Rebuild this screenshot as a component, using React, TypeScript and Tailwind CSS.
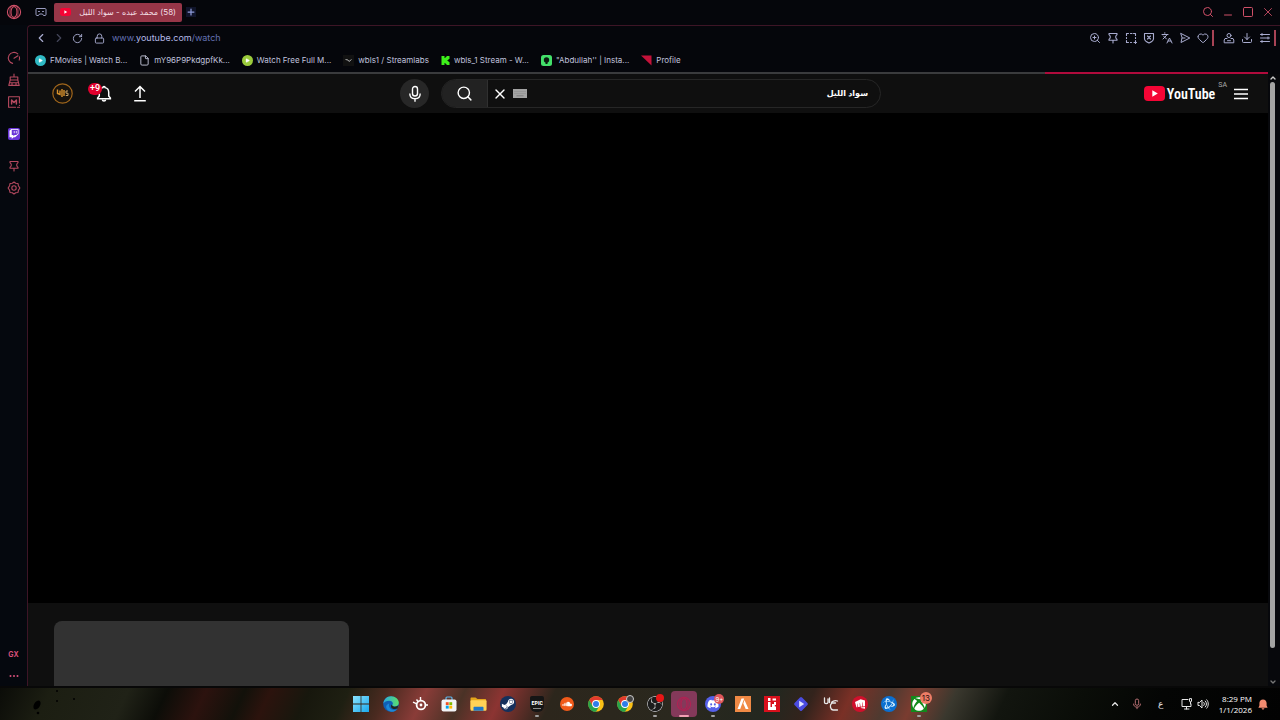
import React from 'react';
import {
    ChevronLeft, ChevronRight, ChevronUp, ChevronDown, RotateCw, Lock, Search, X, Square, Minus, Plus,
    ZoomIn, Languages, Heart, Download, File, Play,
} from 'lucide-react';
import { FaTwitch, FaSteamSymbol, FaSoundcloud, FaDiscord, FaXbox } from 'react-icons/fa';
import { SiRiotgames, SiBattledotnet, SiKick, SiObsstudio } from 'react-icons/si';

/* ---------- small drawings ---------- */

const line = { fill: 'none', stroke: 'currentColor', strokeLinecap: 'round', strokeLinejoin: 'round' } as const;

const OperaLogo = () => (
    <svg viewBox="0 0 16 16" className="size-4" {...line} strokeWidth={1.1}>
        <circle cx="8" cy="8" r="6.6" />
        <ellipse cx="8" cy="8" rx="3" ry="5.4" />
        <path d="M5.2 2.4C3.4 4 3.4 12 5.2 13.600M10.800 2.400C12.600 4 12.600 12 10.800 13.600" opacity=".6" />
    </svg>
);

const Gamepad = () => (
    <svg viewBox="0 0 12 12" className="size-3" {...line} strokeWidth={1}>
        <path d="M2 2.500h8c.6 0 1 .5 1 1v5c0 .6-.4 1-1 1H8.500L7.500 8h-3L3.500 9.500H2c-.6 0-1-.4-1-1v-5c0-.5.4-1 1-1z" />
        <path d="M3.500 5.500h1M7.500 5.500h1" />
    </svg>
);

const PushPin = () => (
    <svg viewBox="0 0 12 12" className="size-3" {...line} strokeWidth={1.1}>
        <path d="M2 1.500h8v1.200L8.800 4v2L10 7.300v1H2v-1L3.200 6V4L2 2.700zM6 8.500V11" />
    </svg>
);

const Speed = () => (
    <svg viewBox="0 0 14 14" className="size-3.5" {...line} strokeWidth={1.1}>
        <path d="M10.800 2.900A5.600 5.600 0 1 0 5.600 12.400M12.400 5.800c.3 1.200.2 2.300-.2 3.300M7 7.200l4-2.400" />
    </svg>
);

const Cleaner = () => (
    <svg viewBox="0 0 14 14" className="size-3.5" {...line} strokeWidth={1.1}>
        <path d="M7 1v3M3.200 4h7.600v3H3.200zM3.200 7L1.800 12.400h10.400L10.800 7M2.600 9.800h8.800M5 12.200v-1.600M9 12.200v-1.600" />
    </svg>
);

const ModBox = () => (
    <svg viewBox="0 0 14 14" className="size-3.5" {...line} strokeWidth={1.1}>
        <path d="M12.400 8V1.700H1.600v10.600h7" />
        <path d="M4.600 9V5L7 7.500 9.400 5v4" strokeWidth={1.500} />
        <path d="M10.500 12.300h2M12.400 10.300v.2" />
    </svg>
);

const Gear = () => (
    <svg viewBox="0 0 14 14" className="size-3.5" {...line} strokeWidth={1.1}>
        <path d="M7 1l1.700 1.300 2.300.2.400 2.200L12.900 7l-1.500 2.300-.4 2.200-2.300.2L7 13l-1.700-1.300-2.300-.2-.4-2.200L1.100 7l1.500-2.300.4-2.200 2.300-.2z" />
        <circle cx="7" cy="7" r="2.200" />
    </svg>
);

const Snapshot = () => (
    <svg viewBox="0 0 12 12" className="size-3" {...line} strokeWidth={1.1}>
        <path d="M1.500 3.500v-2h2M5.500 1.500h1.500M8.500 1.500h2v2M1.500 5.500v1M1.500 8.500v2h2M5.500 10.500h1M10.500 5.500v1M10.500 8.500v3M9 10.500h2.500" />
    </svg>
);

const AdShield = () => (
    <svg viewBox="0 0 12 12" className="size-3" {...line} strokeWidth={1.1}>
        <path d="M1.500 1.500h9v5.200c0 1.800-2 3.200-4.500 4.300-2.500-1.100-4.500-2.500-4.500-4.300zM4.500 4l3 3M7.500 4l-3 3" />
    </svg>
);

const SendTo = () => (
    <svg viewBox="0 0 12 12" className="size-3" {...line} strokeWidth={1}>
        <path d="M2 1.500L10.800 6 2 10.500 3 6zM3 6h3" />
    </svg>
);

const Profile = () => (
    <svg viewBox="0 0 12 12" className="size-3" {...line} strokeWidth={1}>
        <circle cx="6" cy="3.500" r="2" />
        <path d="M4 6.500H2L1.200 8v2.800h9.600V8L10 6.500H8M4.500 8.700h3" />
    </svg>
);

const EasySetup = () => (
    <svg viewBox="0 0 12 12" className="size-3" {...line} strokeWidth={1}>
        <path d="M1.500 2.500h9M1.500 6h9M1.500 9.500h9M3 1.500v2M9 5v2M3 8.500v2" />
    </svg>
);

const Bell = () => (
    <svg viewBox="0 0 24 24" className="size-[18px]" fill="none" stroke="currentColor" strokeWidth={2}>
        <path d="M3.500 18.200v-1l2.200-2.600V9.800c0-3.300 1.900-5.700 4.800-6.300 0-2 3-2 3 0 2.900.6 4.800 3 4.800 6.300v4.800l2.200 2.600v1z" />
        <path d="M9.800 19.500c.3 2.600 4.100 2.600 4.400 0" />
    </svg>
);

const Upload = () => (
    <svg viewBox="0 0 18 18" className="size-[18px]" fill="none" stroke="currentColor" strokeWidth={1.500}>
        <path d="M9 13V2M4 6.500l5-5 5 5M3.200 15.700h11.600" />
    </svg>
);

const Mic = ({ className }: { className: string }) => (
    <svg viewBox="0 0 18 18" className={className} fill="none" stroke="currentColor" strokeWidth={1.400}>
        <rect x="6.500" y="1.500" width="5" height="9.500" rx="2.500" />
        <path d="M3.800 8.500c0 3.200 2.200 5.200 5.200 5.200s5.200-2 5.200-5.200M9 13.700v3" />
    </svg>
);

const YouTubeMark = ({ className }: { className: string }) => (
    <svg viewBox="0 0 21 15" className={className}>
        <rect width="21" height="15" rx="4" fill="#f50535" />
        <path d="M8.300 4.300v6.400l5.500-3.200z" fill="#fff" />
    </svg>
);

const Keyboard = () => (
    <svg viewBox="0 0 14 9" className="h-[9px] w-3.5">
        <rect width="14" height="9" fill="#a3a3a3" />
        <path d="M1.500 2.500h11M1.500 4.500h11" stroke="#8a8a8a" strokeDasharray="1 1" />
        <path d="M3.500 6.800h7" stroke="#7c7c7c" />
    </svg>
);

/* ---------- taskbar drawings ---------- */

const WindowsLogo = () => (
    <svg viewBox="0 0 16 16" className="size-4">
        <linearGradient id="win" x1="0" y1="0" x2="1" y2="1">
            <stop offset="0" stopColor="#8be3ff" /><stop offset="1" stopColor="#19a8ec" />
        </linearGradient>
        <path d="M0 0h7.600v7.600H0zM8.400 0H16v7.600H8.400zM0 8.400h7.600V16H0zM8.400 8.400H16V16H8.400z" fill="url(#win)" />
    </svg>
);

const EdgeLogo = () => (
    <svg viewBox="0 0 16 16" className="size-4">
        <linearGradient id="edge" x1="0" y1="0" x2="1" y2="0">
            <stop offset="0" stopColor="#2aa8e0" /><stop offset="1" stopColor="#5be06a" />
        </linearGradient>
        <circle cx="8" cy="8" r="7.800" fill="#0f5fb5" />
        <path d="M.3 7.500C1 3 4 .2 8 .2c4.500 0 7.800 3.200 7.800 6.500 0 2.500-2 3.800-4 3.800-1.800 0-2.600-.6-2.600-1.200 0-.5.700-.7.700-1.800 0-1.600-1.600-2.800-3.800-2.800C3.500 4.700 1.300 5.900.3 7.500z" fill="url(#edge)" />
        <path d="M6 8.500c-.4 3 1.800 5.400 5 5.400 1.500 0 2.800-.4 3.800-1.200-1.300 2-3.800 3.100-6.300 3.100-3.400-.4-5.500-3-5.300-5.300C3.400 9 4.500 8 6.200 7.500z" fill="#1b88d8" />
        <path d="M9.200 9.300c0 .8 1 1.400 2.600 1.400 1.300 0 2.600-.4 3.400-1.400l-.6 3c-1.600.9-3.600 1-5.200.2-1.200-.7-1.900-2.400-.9-4.100z" fill="#22261c" />
    </svg>
);

const SteelSeries = () => (
    <svg viewBox="0 0 16 16" className="size-4" fill="none" stroke="#fff">
        <circle cx="9" cy="9" r="4.400" strokeWidth="1.800" />
        <circle cx="9" cy="9" r="1.400" fill="#fff" stroke="none" />
        <path d="M8.500 1v3.500M1 6.200l3.800 1.600M13.500 9H16M4.500 3.500L6 5.500" strokeWidth="1.400" />
    </svg>
);

const StoreLogo = () => (
    <svg viewBox="0 0 16 16" className="size-4">
        <path d="M5 4V2c0-.6.400-1 1-1h4c.6 0 1 .4 1 1v2" fill="none" stroke="#5cb8ee" strokeWidth="1.200" />
        <rect x=".5" y="3.500" width="15" height="12" rx="2" fill="#f2f4f6" />
        <path d="M4.800 6.200h2.900v2.900H4.800z" fill="#f25022" /><path d="M8.300 6.200h2.900v2.900H8.300z" fill="#7fba00" />
        <path d="M4.800 9.700h2.900v2.900H4.800z" fill="#00a4ef" /><path d="M8.300 9.700h2.900v2.900H8.300z" fill="#ffb900" />
    </svg>
);

const FolderLogo = () => (
    <svg viewBox="0 0 17 16" className="h-4 w-[17px]">
        <path d="M.5 2.500c0-.6.4-1 1-1h4L7.500 3H15c.7 0 1.200.5 1.200 1.200V13H.5z" fill="#e3a51c" />
        <rect x=".5" y="4.200" width="16" height="10.600" rx="1" fill="#ffd257" />
        <path d="M3.500 14.800v-3c0-.6.400-1 1-1h8c.6 0 1 .4 1 1v3z" fill="#1f78c8" />
    </svg>
);

const ChromeLogo = () => (
    <svg viewBox="0 0 16 16" className="size-4">
        <circle cx="8" cy="8" r="7.800" fill="#fbc116" />
        <path d="M1.240 4.100A7.800 7.800 0 0 1 14.760 4.100H8L4.600 10z" fill="#e33b2e" />
        <path d="M1.240 4.100A7.800 7.800 0 0 0 8 15.800L11.400 10H4.600z" fill="#27a34b" />
        <circle cx="8" cy="8" r="3.900" fill="#fff" />
        <circle cx="8" cy="8" r="3" fill="#2f7de9" />
    </svg>
);

const EpicLogo = () => (
    <span className="flex h-4 w-3.5 flex-col items-center rounded-xs rounded-b-md bg-[#151515] pt-1 font-['Roboto_Condensed','Roboto',sans-serif] text-[6px] leading-none font-bold text-white">
        EPIC
        <span className="mt-0.5 h-px w-2 bg-[#8a8a8a]" />
    </span>
);

const SoundCloud = () => (
    <span className="flex size-3.5 items-center justify-center rounded-full bg-[#f05a1a] text-white">
        <FaSoundcloud className="size-2.5" />
    </span>
);

const FaceitLogo = () => (
    <svg viewBox="0 0 16 16" className="size-4">
        <rect width="16" height="16" fill="#f08a45" />
        <path d="M2.500 13L6.500 2.500h2.700L5.200 13zM9.500 4l4 9h-2.800L8.300 7.500z" fill="#fff" />
    </svg>
);

const RedLogo = () => (
    <svg viewBox="0 0 16 16" className="size-4">
        <rect width="16" height="16" fill="#d8101c" />
        <path d="M4 2h2.500v3H4zM4 6h2.500v5H8V8h2V6h2v3h-1.200v1.500H12V14H4zM8.500 2.500H12v2H8.500z" fill="#fff" />
    </svg>
);

const DiamondLogo = () => (
    <svg viewBox="0 0 16 16" className="size-4">
        <rect x="2.700" y="2.700" width="10.600" height="10.600" rx="1.500" transform="rotate(45 8 8)" fill="#4a4be0" />
        <path d="M6.200 4.800v6.400L11.200 8z" fill="#e4e6ff" />
    </svg>
);

const ScriptLogo = () => (
    <svg viewBox="0 0 16 16" className="size-4" {...line} stroke="#e8e8e8" strokeWidth={1.300}>
        <path d="M1.500 2v4.500c0 1.500 3 1.500 3.500 0V3M6.500 2v4.500M14.500 5c-3-1-6 .5-6 2h4M8.500 7.500c-1.800 1.500-1.500 6 1.500 6.500h4.500" />
    </svg>
);

const RiotLogo = () => (
    <span className="flex size-4 items-center justify-center rounded-full bg-[#d0102c] text-white">
        <SiRiotgames className="size-2.5" />
    </span>
);

const BattleNet = () => (
    <span className="flex size-4 items-center justify-center rounded-full bg-[#0a6fd0] text-[#d4efff]">
        <SiBattledotnet className="size-3" />
    </span>
);

const SteamLogo = () => (
    <span className="flex size-4 items-center justify-center rounded-full bg-[#14305c] text-white">
        <FaSteamSymbol className="size-3.5" />
    </span>
);

const XboxLogo = () => (
    <span className="flex size-4 items-center justify-center bg-[#128a1c] text-white">
        <FaXbox className="size-3.5" />
    </span>
);

/* ---------- data ---------- */

const bookmarks = [
    { label: 'FMovies | Watch B...', icon: <Play className="size-[11px] rounded-full bg-[#2fb9c4] fill-white p-[3px] text-white" /> },
    { label: 'mY96P9PkdgpfKk...', icon: <File className="size-[11px] text-[#c6c8dc]" /> },
    { label: 'Watch Free Full M...', icon: <Play className="size-[11px] rounded-full bg-[#9bcb3c] fill-white p-[3px] text-white" /> },
    {
        label: 'wbls1 / Streamlabs',
        icon: (
            <svg viewBox="0 0 11 11" className="size-[11px]">
                <rect width="11" height="11" fill="#111" />
                <path d="M2.500 4.500L5 5l1 1.500L8.500 4.500" fill="none" stroke="#aaa" />
            </svg>
        ),
    },
    { label: 'wbls_1 Stream - W...', icon: <SiKick className="size-[9px] text-[#3df01a]" /> },
    {
        label: '"Abdullah\'\' | Insta...',
        icon: (
            <svg viewBox="0 0 11 11" className="size-[11px]">
                <rect width="11" height="11" rx="2.500" fill="#43e06a" />
                <circle cx="5.500" cy="5" r="2.700" fill="#0b1a10" />
                <path d="M4.500 7h2v2h-2z" fill="#0b1a10" />
            </svg>
        ),
    },
    {
        label: 'Profile',
        icon: (
            <svg viewBox="0 0 11 11" className="size-[11px]">
                <path d="M0 .5h10.500v10z" fill="#c4123a" />
            </svg>
        ),
    },
];

const toolbarIcons = [
    { label: 'Zoom', icon: <ZoomIn className="size-3" strokeWidth={2} /> },
    { label: 'Pinboards', icon: <PushPin /> },
    { label: 'Snapshot', icon: <Snapshot /> },
    { label: 'Ad blocker', icon: <AdShield /> },
    { label: 'Translate', icon: <Languages className="size-3" strokeWidth={2} /> },
    { label: 'Send to Flow', icon: <SendTo /> },
    { label: 'Add to favourites', icon: <Heart className="size-3" strokeWidth={2} /> },
];

const toolbarMenu = [
    { label: 'Profile', icon: <Profile /> },
    { label: 'Downloads', icon: <Download className="size-3" strokeWidth={2} /> },
    { label: 'Easy setup', icon: <EasySetup /> },
];

const windowControls = [
    { label: 'Search tabs', icon: <Search className="size-3" strokeWidth={2} /> },
    { label: 'Minimize', icon: <Minus className="mt-1.5 size-3" strokeWidth={2} /> },
    { label: 'Maximize', icon: <Square className="size-3" strokeWidth={2} /> },
    { label: 'Close', icon: <X className="size-3.5" strokeWidth={1.500} /> },
];

const apps = [
    { name: 'Start', icon: <WindowsLogo /> },
    { name: 'Edge', icon: <EdgeLogo /> },
    { name: 'SteelSeries', icon: <SteelSeries /> },
    { name: 'Microsoft Store', icon: <StoreLogo /> },
    { name: 'File Explorer', icon: <FolderLogo /> },
    { name: 'Steam', icon: <SteamLogo /> },
    { name: 'Epic Games', icon: <EpicLogo />, open: true },
    { name: 'SoundCloud', icon: <SoundCloud /> },
    { name: 'Chrome', icon: <ChromeLogo /> },
    { name: 'Chrome profile', icon: <ChromeLogo />, badge: <span className="absolute -top-px right-1 size-2 rounded-full border border-[#ccc] bg-[#444]" /> },
    { name: 'OBS', icon: <SiObsstudio className="size-4 rounded-full bg-[#1c1c1c] text-[#d5d5d5]" />, open: true, badge: <span className="absolute -top-0.5 right-1 size-2 rounded-full bg-[#e81616]" /> },
    { name: 'Opera GX', icon: <span className="size-4 text-[#b02253]"><OperaLogo /></span>, active: true },
    { name: 'Discord', icon: <span className="flex size-4 items-center justify-center rounded-full bg-[#5560e8] text-white"><FaDiscord className="size-3" /></span>, open: true, badge: <span className="absolute -top-0.5 right-0.5 flex size-2.5 items-center justify-center rounded-full bg-[#e0565a] font-['Inter',sans-serif] text-[6px] text-white">9+</span> },
    { name: 'FACEIT', icon: <FaceitLogo /> },
    { name: 'Launcher', icon: <RedLogo /> },
    { name: 'Player', icon: <DiamondLogo /> },
    { name: 'Notes', icon: <ScriptLogo /> },
    { name: 'Riot Client', icon: <RiotLogo /> },
    { name: 'Battle.net', icon: <BattleNet /> },
    { name: 'Xbox', icon: <XboxLogo />, open: true, badge: <span className="absolute -top-1 right-0 flex size-3 items-center justify-center rounded-full bg-[#ee7d66] font-['Inter',sans-serif] text-[8px] text-[#2a1010]">13</span> },
];

/* ---------- sections ---------- */

function TabStrip() {
    return (
        <header className="flex h-[25px] shrink-0 items-center pb-px text-[#d05068]">
            <button aria-label="Menu" className="flex w-[27px] justify-center"><OperaLogo /></button>
            <button aria-label="GX Corner" className="flex w-[27px] justify-center text-[#9a9cc0]"><Gamepad /></button>
            <div className="flex h-[19px] w-32 items-center gap-2 rounded-xs bg-[#973648] px-1.5">
                <YouTubeMark className="h-2 w-[11px] shrink-0" />
                <span dir="rtl" className="flex-1 overflow-hidden text-[8px] whitespace-nowrap text-[#f3dfe4]">(58) محمد عبده - سواد الليل</span>
            </div>
            <button aria-label="New tab" className="ml-1 flex size-2.5 items-center justify-center bg-[#10142a] text-[#8d9ad8]">
                <Plus className="size-2.5" strokeWidth={3} />
            </button>
            <div className="ml-auto flex pr-0.5">
                {windowControls.map((c) => (
                    <button key={c.label} aria-label={c.label} className="flex w-5 items-center justify-center">{c.icon}</button>
                ))}
            </div>
        </header>
    );
}

function Sidebar() {
    const item = 'flex h-[22px] w-full items-center justify-center';
    return (
        <aside className="flex w-[27px] shrink-0 flex-col items-center bg-[#05080e] pt-[22px] text-[#b5495f]">
            <button aria-label="Speed dial" className={item}><Speed /></button>
            <button aria-label="GX Cleaner" className={item}><Cleaner /></button>
            <button aria-label="Mods" className={item}><ModBox /></button>
            <button aria-label="Twitch" className={`${item} my-2.5`}>
                <FaTwitch className="size-3 rounded-xs bg-[#6a35d8] p-px text-white" />
            </button>
            <button aria-label="Pinboards" className={item}><PushPin /></button>
            <button aria-label="Settings" className={item}><Gear /></button>
            <button className={`${item} mt-auto text-[7px] font-bold text-[#d8507a]`}>GX</button>
            <button aria-label="More" className="flex h-5 w-full items-center justify-center">
                <svg viewBox="0 0 10 4" className="h-1 w-2.5 fill-[#d8507a]">
                    <circle cx="1.500" cy="2" r="1" /><circle cx="5" cy="2" r="1" /><circle cx="8.500" cy="2" r="1" />
                </svg>
            </button>
        </aside>
    );
}

function AddressBar() {
    return (
        <div className="flex h-6 items-center text-[#a9acd0]">
            <div className="flex flex-1 items-center pl-1">
                <button aria-label="Back" className="flex w-[18px] justify-center"><ChevronLeft className="size-3.5" /></button>
                <button aria-label="Forward" className="flex w-[18px] justify-center text-[#44465a]"><ChevronRight className="size-3.5" /></button>
                <button aria-label="Reload" className="flex w-[18px] justify-center"><RotateCw className="size-[11px]" /></button>
                <button aria-label="Site information" className="ml-1 flex w-[18px] justify-center"><Lock className="size-[11px]" /></button>
                <a href="#" className="ml-1 text-[9px] text-[#6472b4]">
                    www.<span className="text-[#b3b9e6]">youtube.com</span>/watch
                </a>
            </div>
            {toolbarIcons.map((t) => (
                <button key={t.label} aria-label={t.label} className="flex w-[18px] justify-center">{t.icon}</button>
            ))}
            <span className="mr-1.5 h-4 w-0.5 bg-[#a84355]" />
            {toolbarMenu.map((t) => (
                <button key={t.label} aria-label={t.label} className="flex w-[18px] justify-center">{t.icon}</button>
            ))}
            <span className="mr-1 h-4 w-0.5 bg-[#a84355]" />
        </div>
    );
}

function Bookmarks() {
    return (
        <nav className="flex h-[22px] items-center gap-3 pb-0.5 pl-[7px]">
            {bookmarks.map((b) => (
                <a key={b.label} href="#" className="flex items-center gap-1 text-[8px] whitespace-nowrap text-[#c0c3de]">
                    {b.icon}
                    {b.label}
                </a>
            ))}
        </nav>
    );
}

function YouTubeHeader() {
    return (
        <div className="flex h-[39px] items-center bg-[#0f0f0f] pr-[15px] pl-[18px] text-white">
            <div className="flex flex-1 items-center">
                <button aria-label="Account" className="mr-2.5 flex w-8 justify-center">
                    <svg viewBox="0 0 21 21" className="size-[21px]">
                        <circle cx="10.500" cy="10.500" r="9.700" fill="#17120c" stroke="#a0661c" strokeWidth="1.200" />
                        <path d="M5.500 6.500v4l2.500 1V7.500M10 6v8M12 7v6" fill="none" stroke="#d8912c" strokeWidth="1.400" />
                        <path d="M16 8h-2v2.200h2v2.300h-2.200" fill="none" stroke="#c9a46a" />
                    </svg>
                </button>
                <button aria-label="Notifications" className="relative mr-1 flex w-8 justify-center">
                    <Bell />
                    <span className="absolute -top-0.5 left-0 flex h-3 items-center rounded-full bg-[#e1002d] px-0.5 font-['Roboto',sans-serif] text-[9px] leading-none font-medium">+9</span>
                </button>
                <button aria-label="Create" className="flex w-8 justify-center"><Upload /></button>
            </div>

            <div className="mr-[18px] flex items-center gap-3">
                <button aria-label="Search with your voice" className="flex size-[29px] items-center justify-center rounded-full bg-[#272727]">
                    <Mic className="size-[18px]" />
                </button>
                <form className="flex h-[29px] w-[440px] overflow-hidden rounded-full border border-[#262626]" onSubmit={(e) => e.preventDefault()}>
                    <button aria-label="Search" className="flex w-[46px] items-center justify-center border-r border-[#303030] bg-[#222222]">
                        <Search className="size-[17px]" strokeWidth={2} />
                    </button>
                    <button type="button" aria-label="Clear" className="flex w-6 items-center justify-center"><X className="size-4" /></button>
                    <button type="button" aria-label="Keyboard" className="flex w-4 items-center justify-center"><Keyboard /></button>
                    <input
                        dir="rtl"
                        aria-label="Search query"
                        defaultValue="سواد الليل"
                        className="min-w-0 flex-1 bg-transparent pr-3 font-['Liberation_Sans','DejaVu_Sans',sans-serif] text-[8px] font-bold outline-none"
                    />
                </form>
            </div>

            <div className="flex flex-1 items-center justify-end">
                <a href="#" aria-label="YouTube home" className="flex items-center gap-0.5">
                    <YouTubeMark className="h-[15px] w-[21px]" />
                    <span className="font-['Roboto_Condensed','Roboto',sans-serif] text-[14px] leading-none font-semibold">YouTube</span>
                </a>
                <span className="mb-4 ml-[3px] font-['Roboto',sans-serif] text-[7px] leading-none text-[#aaaaaa]">SA</span>
                <button aria-label="Guide" className="ml-0.5 flex w-6 justify-center">
                    <svg viewBox="0 0 14 12" className="h-3 w-3.5" stroke="#fff" strokeWidth="1.500"><path d="M0 1.500h14M0 6h14M0 10.500h14" /></svg>
                </button>
            </div>
        </div>
    );
}

function Scrollbar() {
    return (
        <div className="flex w-3 shrink-0 flex-col bg-[#07080c]">
            <ChevronUp className="ml-px size-2 text-[#ccc]" strokeWidth={4} />
            <div className="min-h-0 flex-1">
                <div className="ml-0.5 h-[95%] w-[5px] rounded-full bg-[#a3a3a3]" />
            </div>
            <ChevronDown className="ml-px size-2 text-[#777]" strokeWidth={4} />
        </div>
    );
}

function Taskbar() {
    return (
        <footer className="flex h-[34px] shrink-0 items-center border-t-2 border-[#080808] bg-[linear-gradient(115deg,#0b0c08_0%,#1c1e12_4%,#202217_10%,#0c0d08_13%,#2c120e_16%,#12110a_19%,#2c130d_21%,#17170d_24%,#1e1f12_27%,#4a2a20_30%,#8a3c38_33%,#4a3226_36%,#8c3432_39%,#2c261c_43%,#2a281e_53%,#23271f_60%,#33231c_63%,#7a3026_66%,#4e3a30_69%,#7a3c30_71%,#3a382e_74%,#12150f_78%,#0a0d08_84%,#040504_90%,#020202_100%)] text-[#e6e6e6]">
            <div className="flex-1 pl-3">
                <svg viewBox="0 0 120 32" className="h-8 w-[120px] fill-black">
                    <ellipse cx="25" cy="17" rx="3" ry="5" transform="rotate(30 25 17)" />
                    <circle cx="26" cy="25" r="1.300" /><circle cx="45" cy="3" r="1" /><circle cx="45" cy="13" r="1" /><circle cx="62" cy="11" r="1" />
                </svg>
            </div>
            <div className="grid w-[587px] grid-cols-20">
                {apps.map((a) => (
                    <div key={a.name} className="flex justify-center">
                        <button
                            aria-label={a.name}
                            className={`relative flex h-[26px] w-[26px] flex-col items-center justify-center rounded-sm ${a.active ? 'bg-[#84395a]' : ''}`}
                        >
                            <span className="relative flex w-full justify-center">{a.icon}{a.badge}</span>
                            {a.open && <span className="absolute bottom-0 h-0.5 w-1 rounded-full bg-[#a0a0a0]" />}
                            {a.active && <span className="absolute bottom-0 h-0.5 w-2.5 rounded-full bg-[#f3a0b4]" />}
                        </button>
                    </div>
                ))}
            </div>
            <div className="flex flex-1 items-center justify-end pr-3">
                <button aria-label="Hidden icons" className="flex w-5 justify-center"><ChevronUp className="size-2.5" strokeWidth={3} /></button>
                <button aria-label="Microphone" className="flex w-6 justify-center text-[#c07478]"><Mic className="size-3" /></button>
                <button className="flex w-6 justify-center text-[9px]">ع</button>
                <button aria-label="Network and volume" className="ml-1 flex items-center gap-1 px-1">
                    <svg viewBox="0 0 12 12" className="size-3" {...line} strokeWidth={1}>
                        <path d="M7 1.500H1v7h9V6M3.500 11h4.500M5.500 8.500V11M8.500 1v2c0 .6.500 1 1 1s1-.4 1-1V1zM9.500 4v2" />
                    </svg>
                    <svg viewBox="0 0 12 12" className="size-3" {...line} strokeWidth={1}>
                        <path d="M1 4.500v3h1.500L5 10V2L2.500 4.500zM6.800 4.500c.8.800.8 2.200 0 3M8.300 3c1.600 1.600 1.600 4.400 0 6M9.800 1.800c2 2.200 2 6.200 0 8.400" />
                    </svg>
                </button>
                <div className="ml-1.5 text-right font-['Open_Sans',sans-serif] text-[8px] leading-[11px] text-white">
                    <div>8:29 PM</div>
                    <div>1/1/2026</div>
                </div>
                <button aria-label="Notifications" className="ml-1.5">
                    <svg viewBox="0 0 10 11" className="h-[11px] w-2.5 fill-[#f28b70]">
                        <path d="M5 .5c2.100 0 3.600 1.600 3.600 3.600v2.400L9.600 8.700H.4L1.400 6.500V4.100C1.400 2.100 2.900.5 5 .5zM3.600 9.300h2.800c-.2 1.600-2.600 1.600-2.800 0z" />
                    </svg>
                </button>
            </div>
        </footer>
    );
}

export default function App() {
    return (
        <div className="flex h-screen flex-col overflow-hidden bg-[#05060b] font-['Inter','DejaVu_Sans',sans-serif]">
            <TabStrip />
            <div className="flex min-h-0 flex-1">
                <Sidebar />
                <div className="flex min-w-0 flex-1 flex-col rounded-tl-sm border-t border-l border-[#3d1526]">
                    <AddressBar />
                    <Bookmarks />
                    {/* Page load progress */}
                    <div className="mr-3 flex h-0.5 shrink-0 bg-[#3a3b3d]">
                        <div className="ml-auto w-[18%] bg-[#b00b3c]" />
                    </div>
                    <div className="flex min-h-0 flex-1">
                        <main className="flex min-w-0 flex-1 flex-col bg-black">
                            <YouTubeHeader />
                            {/* Player */}
                            <div className="min-h-0 flex-1" />
                            {/* Skeleton below the player */}
                            <div className="h-[83px] bg-[#0f0f0f] px-[26px] pt-[18px]">
                                <div className="h-full w-[295px] rounded-t-lg bg-[#323232]" />
                            </div>
                        </main>
                        <Scrollbar />
                    </div>
                </div>
            </div>
            <Taskbar />
        </div>
    );
}
